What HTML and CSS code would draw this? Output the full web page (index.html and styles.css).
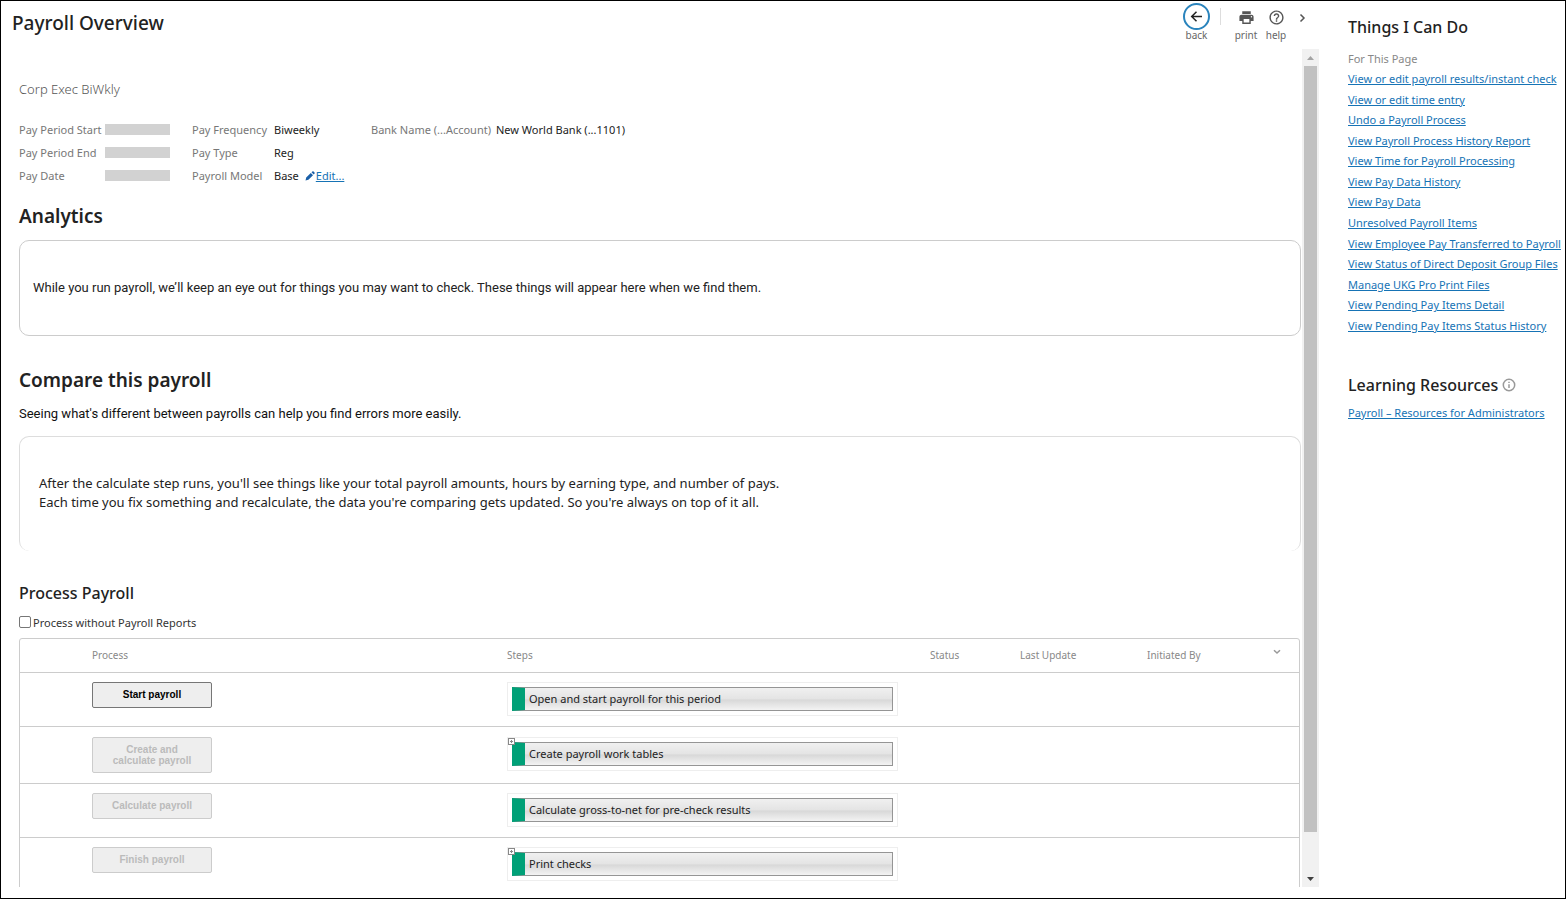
FILE: index.html
```html
<!DOCTYPE html>
<html lang="en">
<head>
<meta charset="utf-8">
<title>Payroll Overview</title>
<link rel="stylesheet" href="styles.css">
</head>
<body>
<div class="page">
  <main class="main">
    <header class="header">
      <h1 class="title">Payroll Overview</h1>
      <nav class="toolbar" aria-label="Page tools">
        <button class="tool tool-back" type="button">
          <span class="back-ring"><svg width="13" height="13" viewBox="0 0 13 13" fill="none" stroke="#222" stroke-width="1.5"><path d="M12 6.500H2M6.500 1.700L1.700 6.500L6.500 11.300"/></svg></span>
          <span>back</span>
        </button>
        <span class="divider"></span>
        <button class="tool tool-print" type="button">
          <svg width="17" height="17" viewBox="0 0 24 24" fill="#555"><path d="M19 8H5c-1.66 0-3 1.34-3 3v6h4v4h12v-4h4v-6c0-1.66-1.34-3-3-3zm-3 11H8v-5h8v5zm3-7c-.55 0-1-.45-1-1s.45-1 1-1 1 .45 1 1-.45 1-1 1zM18 3H6v4h12V3z"/></svg>
          <span>print</span>
        </button>
        <button class="tool tool-help" type="button">
          <svg width="17" height="17" viewBox="0 0 24 24" fill="#555"><path d="M11 18h2v-2h-2v2zm1-16C6.480 2 2 6.480 2 12s4.480 10 10 10 10-4.480 10-10S17.520 2 12 2zm0 18c-4.410 0-8-3.590-8-8s3.590-8 8-8 8 3.590 8 8-3.590 8-8 8zm0-14c-2.210 0-4 1.790-4 4h2c0-1.100.9-2 2-2s2 .9 2 2c0 2-3 1.750-3 5h2c0-2.250 3-2.500 3-5 0-2.210-1.790-4-4-4z"/></svg>
          <span>help</span>
        </button>
        <button class="more" type="button" aria-label="More"><svg width="8" height="10" viewBox="0 0 8 10" fill="none" stroke="#555" stroke-width="1.5"><path d="M1.500 1.500L5 5L1.500 8.500"/></svg></button>
      </nav>
    </header>

    <div class="viewport">
      <div class="content">
        <p class="group-name">Corp Exec BiWkly</p>
        <div class="facts">
          <dl class="fact-list fact-dates">
            <dt>Pay Period Start</dt><dd><span class="redacted"></span></dd>
            <dt>Pay Period End</dt><dd><span class="redacted"></span></dd>
            <dt>Pay Date</dt><dd><span class="redacted"></span></dd>
          </dl>
          <dl class="fact-list fact-pay">
            <dt>Pay Frequency</dt><dd>Biweekly</dd>
            <dt>Pay Type</dt><dd>Reg</dd>
            <dt>Payroll Model</dt>
            <dd class="model">Base <a class="edit" href="#"><svg width="10" height="10" viewBox="0 0 10 10" fill="#1a5fa8"><path d="M0.500 9.500L1.200 6.600L5.800 2L8 4.200L3.400 8.800ZM6.500 1.300L7.400 0.400Q8 0 8.600 0.500L9.500 1.400Q10 2 9.600 2.600L8.700 3.500Z"/></svg><span>Edit...</span></a></dd>
          </dl>
          <dl class="fact-list fact-bank">
            <dt>Bank Name (...Account)</dt><dd>New World Bank (...1101)</dd>
          </dl>
        </div>

        <h2 class="section-title">Analytics</h2>
        <section class="card card-analytics">
          <p>While you run payroll, we’ll keep an eye out for things you may want to check. These things will appear here when we find them.</p>
        </section>

        <h2 class="section-title section-compare">Compare this payroll</h2>
        <p class="lead">Seeing what's different between payrolls can help you find errors more easily.</p>
        <section class="card card-compare">
          <p>After the calculate step runs, you'll see things like your total payroll amounts, hours by earning type, and number of pays.<br>Each time you fix something and recalculate, the data you're comparing gets updated. So you're always on top of it all.</p>
        </section>

        <h2 class="process-title">Process Payroll</h2>
        <label class="option"><input class="checkbox" type="checkbox"><span>Process without Payroll Reports</span></label>

        <div class="table-frame">
          <table class="steps-table">
            <colgroup>
              <col class="col-process"><col class="col-steps"><col class="col-status"><col class="col-update"><col class="col-by"><col class="col-menu">
            </colgroup>
            <thead>
              <tr>
                <th class="first">Process</th><th>Steps</th><th>Status</th><th>Last Update</th><th>Initiated By</th>
                <th><button class="more" type="button" aria-label="Column options"><svg width="8" height="6" viewBox="0 0 8 6" fill="none" stroke="#999" stroke-width="1.5"><path d="M1 1.200L4 4L7 1.200"/></svg></button></th>
              </tr>
            </thead>
            <tbody>
              <tr>
                <td class="first"><button class="action" type="button">Start payroll</button></td>
                <td><div class="step"><div class="bar">Open and start payroll for this period</div></div></td>
                <td></td><td></td><td></td><td></td>
              </tr>
              <tr class="tall">
                <td class="first"><button class="action" type="button" disabled>Create and<br>calculate payroll</button></td>
                <td><div class="step"><button class="expand" type="button" aria-label="Expand"><svg width="7" height="7" viewBox="0 0 7 7" fill="none"><rect x="0.500" y="0.500" width="6" height="6" stroke="#888"/><path d="M3.500 2V5M2 3.500H5" stroke="#888"/></svg></button><div class="bar">Create payroll work tables</div></div></td>
                <td></td><td></td><td></td><td></td>
              </tr>
              <tr>
                <td class="first"><button class="action" type="button" disabled>Calculate payroll</button></td>
                <td><div class="step"><div class="bar">Calculate gross-to-net for pre-check results</div></div></td>
                <td></td><td></td><td></td><td></td>
              </tr>
              <tr>
                <td class="first"><button class="action" type="button" disabled>Finish payroll</button></td>
                <td><div class="step"><button class="expand" type="button" aria-label="Expand"><svg width="7" height="7" viewBox="0 0 7 7" fill="none"><rect x="0.500" y="0.500" width="6" height="6" stroke="#888"/><path d="M3.500 2V5M2 3.500H5" stroke="#888"/></svg></button><div class="bar">Print checks</div></div></td>
                <td></td><td></td><td></td><td></td>
              </tr>
            </tbody>
          </table>
        </div>
      </div>

      <div class="scrollbar" aria-hidden="true">
        <span class="scroll-cap"><svg width="7" height="4" viewBox="0 0 7 4" fill="#a3a3a3"><path d="M0 4L3.500 0L7 4Z"/></svg></span>
        <span class="scroll-track"><span class="scroll-thumb"></span></span>
        <span class="scroll-cap"><svg width="7" height="4" viewBox="0 0 7 4" fill="#404040"><path d="M0 0L3.500 4L7 0Z"/></svg></span>
      </div>
    </div>
  </main>

  <aside class="side">
    <h2 class="side-title">Things I Can Do</h2>
    <p class="side-label">For This Page</p>
    <ul class="links">
      <li><a href="#">View or edit payroll results/instant check</a></li>
      <li><a href="#">View or edit time entry</a></li>
      <li><a href="#">Undo a Payroll Process</a></li>
      <li><a href="#">View Payroll Process History Report</a></li>
      <li><a href="#">View Time for Payroll Processing</a></li>
      <li><a href="#">View Pay Data History</a></li>
      <li><a href="#">View Pay Data</a></li>
      <li><a href="#">Unresolved Payroll Items</a></li>
      <li><a href="#">View Employee Pay Transferred to Payroll</a></li>
      <li><a href="#">View Status of Direct Deposit Group Files</a></li>
      <li><a href="#">Manage UKG Pro Print Files</a></li>
      <li><a href="#">View Pending Pay Items Detail</a></li>
      <li><a href="#">View Pending Pay Items Status History</a></li>
    </ul>
    <h2 class="side-title side-learning">Learning Resources <svg width="14" height="14" viewBox="0 0 14 14" fill="none" stroke="#999" stroke-width="1.500"><circle cx="7" cy="7" r="5.700"/><path d="M7 6.200V10M7 3.700V5.100"/></svg></h2>
    <a class="resource" href="#">Payroll – Resources for Administrators</a>
  </aside>
</div>
</body>
</html>
```
FILE: styles.css
```css
* { box-sizing: border-box; }
body {
  margin: 0;
  background: #fff;
  color: #222;
  font: 11px/20px "Noto Sans", "Open Sans", sans-serif;
}
h1, h2, p, dl, dd, ul { margin: 0; padding: 0; }
button { font: inherit; color: inherit; border: 0; background: none; padding: 0; }
svg { display: block; flex: none; }
a { color: #1673b5; text-underline-offset: 1px; }

.page {
  display: grid;
  grid-template-columns: minmax(0, 1fr) 246px;
  height: 100vh;
  border: 1px solid #000;
  padding-bottom: 11px;
  overflow: hidden;
}
.main { display: flex; flex-direction: column; min-height: 0; }

.header {
  display: flex;
  justify-content: space-between;
  flex: none;
  height: 48px;
  padding: 0 12px 0 11px;
}
.title { font-size: 19px; line-height: 24px; font-weight: 500; padding-top: 10px; }
.toolbar { display: flex; align-items: flex-start; padding-top: 2px; }
.tool {
  display: flex;
  flex-direction: column;
  align-items: center;
  font-size: 10px;
  line-height: 12px;
  color: #666;
}
.tool-print, .tool-help { padding-top: 6px; gap: 3px; width: 30px; }
.back-ring {
  display: flex;
  align-items: center;
  justify-content: center;
  width: 27px;
  height: 27px;
  border: 2px solid #2a84bd;
  border-radius: 50%;
}
.tool-back span:last-child { margin-top: -1px; }
.divider { width: 1px; height: 17px; margin: 5px 10px 0 10px; background: #ddd; }
.toolbar > .more { padding: 10px 0 0 8px; }

.viewport { display: flex; flex: 1; min-height: 0; }
.content { flex: 1; min-width: 0; overflow: hidden; padding: 30px 1px 0 18px; }

.group-name { font-size: 13px; font-weight: 300; color: #555; }
.facts { display: flex; padding-top: 19px; line-height: 23px; }
.fact-list { display: grid; grid-auto-rows: 23px; color: #222; }
.fact-list dt { color: #777; }
.fact-dates { grid-template-columns: 86px 87px; }
.fact-pay { grid-template-columns: 82px 97px; }
.fact-bank { grid-template-columns: 125px auto; }
.redacted { display: block; width: 65px; height: 11px; margin-top: 6px; background: #d2d2d2; }
.model, .edit { display: flex; align-items: center; }
.model { gap: 6px; }
.edit { gap: 1px; text-decoration: none; }
.edit span { text-decoration: underline; }

.section-title { font-size: 19px; line-height: 24px; font-weight: 600; padding-top: 17px; }
.section-compare { padding-top: 32px; }
.card { border: 1px solid #ccc; border-radius: 10px; }
.card-analytics {
  margin-top: 12px;
  padding: 36px 13px;
  font: 13px/22px Roboto, sans-serif;
}
.lead { margin-top: 12px; font: 13px/20px Roboto, sans-serif; color: #111; }
.card-compare {
  margin-top: 12px;
  padding: 37px 19px 39px;
  border-color: #ddd;
  border-bottom: 0;
  font-size: 13px;
  line-height: 19px;
}
.process-title { margin-top: 30px; font-size: 16px; line-height: 24px; font-weight: 500; }
.option { display: flex; align-items: center; gap: 2px; margin-top: 8px; color: #333; }
.checkbox {
  appearance: none;
  width: 12px;
  height: 12px;
  margin: 0 0 2px;
  border: 1px solid #767676;
  border-radius: 2px;
  background: #fff;
}

.table-frame { margin: 5px 1px 0 0; border: 1px solid #ccc; border-radius: 3px; }
.steps-table { width: 100%; table-layout: fixed; border-collapse: collapse; }
.col-process { width: 487px; }
.col-steps { width: 423px; }
.col-status { width: 90px; }
.col-update { width: 127px; }
.col-by { width: 126px; }
.steps-table th {
  height: 33px;
  padding: 0;
  font-size: 10px;
  font-weight: 400;
  text-align: left;
  color: #888;
  border-bottom: 1px solid #ccc;
}
.steps-table th .more { display: block; padding-bottom: 6px; }
.steps-table td { height: 54px; padding: 9px 0 0; vertical-align: top; border-bottom: 1px solid #ccc; }
.steps-table .tall td { height: 57px; padding-top: 10px; }
.steps-table .first { padding-left: 72px; }
.action {
  display: block;
  width: 120px;
  min-height: 26px;
  padding: 6px;
  border: 1px solid #767676;
  border-radius: 2px;
  background: #eee;
  color: #000;
  font: bold 10px/11px "Liberation Sans", Arial, sans-serif;
}
.action:disabled { border-color: #ccc; color: #bbb; }
.step { position: relative; width: 391px; padding: 4px; border: 1px solid #eee; }
.bar {
  height: 24px;
  padding-left: 4px;
  border: 1px solid #959595;
  border-left: 13px solid #00a077;
  background: linear-gradient(#f0f0f0, #e4e4e4 50%, #d8d8d8 54%, #f3f3f3);
  color: #222;
  line-height: 22px;
}
.expand { position: absolute; top: 0; left: 0; background: #fff; }

.scrollbar { display: flex; flex-direction: column; flex: none; width: 17px; background: #f1f1f1; }
.scroll-cap { display: flex; align-items: center; justify-content: center; height: 17px; }
.scroll-track { flex: 1; padding: 0 2px; }
.scroll-thumb { display: block; height: 95.300%; background: #c1c1c1; }

.side { padding: 14px 12px 0 29px; white-space: nowrap; }
.side-title {
  display: flex;
  align-items: center;
  gap: 4px;
  font-size: 16px;
  line-height: 24px;
  font-weight: 500;
}
.side-label { margin-top: 10px; color: #888; }
.links {
  display: flex;
  flex-direction: column;
  justify-content: space-between;
  min-height: 267px;
  list-style: none;
}
.side-learning { margin-top: 37px; }
.resource { display: block; margin-top: 6px; }
```
